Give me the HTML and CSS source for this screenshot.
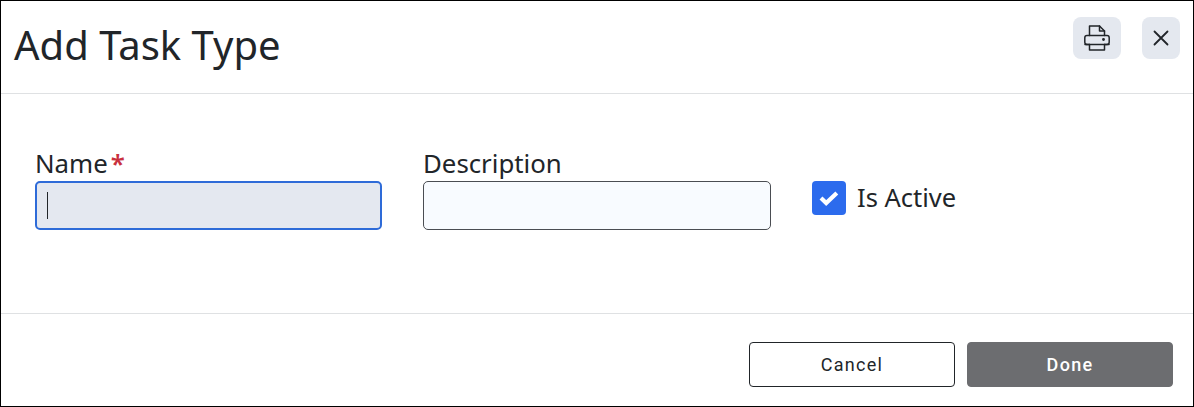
FILE: index.html
```html
<!DOCTYPE html>
<html lang="en">
<head>
    <meta charset="UTF-8">
    <meta name="viewport" content="width=device-width, initial-scale=1.0">
    <title>Add Task Type</title>
    <link rel="stylesheet" href="styles.css">
</head>
<body>
    <div class="dialog">
        <div class="dialog-header">
            <h1>Add Task Type</h1>
            <div class="header-actions">
                <button type="button" class="icon-btn print-btn" aria-label="Print">
                    <svg width="26" height="26" viewBox="0 0 26 26" fill="none" stroke="#212529" stroke-width="1.5" stroke-linejoin="round" stroke-linecap="round">
                        <path d="M5.5 10.5V1h10l5 5v4.5"/>
                        <path d="M15.5 1v5h5"/>
                        <path d="M5.5 19.5H3a2.2 2.2 0 0 1-2.2-2.2v-4.6A2.2 2.2 0 0 1 3 10.5h20a2.2 2.2 0 0 1 2.2 2.2v4.6a2.2 2.2 0 0 1-2.2 2.2h-2.5"/>
                        <path d="M1 19.5h24"/>
                        <path d="M5.5 19.5V25h15v-5.5"/>
                        <circle cx="19.5" cy="14.5" r="0.7" fill="#212529"/>
                    </svg>
                </button>
                <button type="button" class="icon-btn close-btn" aria-label="Close">
                    <svg width="16" height="16" viewBox="0 0 16 16" fill="none" stroke="#212529" stroke-width="1.8" stroke-linecap="round">
                        <path d="M1.5 1.5l13 13M14.5 1.5l-13 13"/>
                    </svg>
                </button>
            </div>
        </div>
        <form class="dialog-body">
            <div class="form-group name-group">
                <label for="name">Name<span class="required">*</span></label>
                <div class="input focused" id="name"><span class="caret"></span></div>
            </div>
            <div class="form-group description-group">
                <label for="description">Description</label>
                <input type="text" id="description" class="input">
            </div>
            <div class="check-group">
                <span class="checkbox">
                    <svg width="20" height="16" viewBox="0 0 20 16" fill="none" stroke="#fff" stroke-width="4.2" stroke-linejoin="miter">
                        <path d="M2 8l5.2 5L17.8 3"/>
                    </svg>
                </span>
                <span class="check-label">Is Active</span>
            </div>
        </form>
        <div class="dialog-footer">
            <button type="button" class="btn btn-cancel">Cancel</button>
            <button type="button" class="btn btn-done">Done</button>
        </div>
    </div>
</body>
</html>
```

FILE: styles.css
```css
html, body {
    margin: 0;
    height: 100%;
}
body {
    font-family: "Noto Sans", "Open Sans", sans-serif;
    color: #212529;
    background: #fff;
}
.dialog {
    box-sizing: border-box;
    height: 100vh;
    border: 1px solid #000;
    display: flex;
    flex-direction: column;
}
.dialog-header {
    box-sizing: border-box;
    height: 93px;
    flex-shrink: 0;
    border-bottom: 1px solid #dfe1e3;
    padding: 15px 13px 0 13px;
    display: flex;
    justify-content: space-between;
    align-items: flex-start;
}
h1 {
    margin: 0;
    font-size: 40px;
    font-weight: 400;
    line-height: 58px;
}
.header-actions {
    display: flex;
    gap: 21px;
    margin-top: 1px;
}
.icon-btn {
    height: 42px;
    padding: 0;
    border: none;
    border-radius: 8px;
    background: #e4e8ef;
    display: flex;
    align-items: center;
    justify-content: center;
}
.print-btn {
    width: 48px;
}
.close-btn {
    width: 38px;
}
.dialog-body {
    flex: 1;
    display: flex;
    padding: 55px 0 0 34px;
    align-items: flex-start;
}
.form-group {
    display: flex;
    flex-direction: column;
}
.name-group {
    width: 347px;
    margin-right: 41px;
}
.description-group {
    width: 348px;
    margin-right: 41px;
}
label {
    font-size: 25.8px;
    font-weight: 400;
    line-height: 28px;
    margin-bottom: 4px;
}
.required {
    color: #c9303e;
    font-weight: 600;
    margin-left: 3px;
}
.input {
    box-sizing: border-box;
    height: 49px;
    width: 100%;
    border: 1px solid #4a4d52;
    border-radius: 5px;
    background: #f8fbff;
    padding: 0 10px;
    display: flex;
    align-items: center;
}
.input.focused {
    border: 2px solid #2e6bd8;
    background: #e4e8f0;
}
.caret {
    width: 1px;
    height: 27px;
    background: #212529;
}
.check-group {
    display: flex;
    align-items: center;
    margin-top: 32px;
    gap: 11px;
}
.checkbox {
    width: 34px;
    height: 34px;
    border-radius: 4px;
    background: #2c6bed;
    display: flex;
    align-items: center;
    justify-content: center;
}
.check-label {
    font-size: 25.5px;
    line-height: 32px;
    padding-bottom: 2px;
}
.dialog-footer {
    box-sizing: border-box;
    height: 93px;
    flex-shrink: 0;
    border-top: 1px solid #dfe1e3;
    padding: 28px 20px 0 0;
    display: flex;
    justify-content: flex-end;
    align-items: flex-start;
    gap: 12px;
}
.btn {
    width: 206px;
    height: 45px;
    border-radius: 4px;
    font-family: Roboto, sans-serif;
    font-size: 18px;
    letter-spacing: 1.3px;
}
.btn-cancel {
    background: #fff;
    border: 1px solid #212529;
    color: #212529;
}
.btn-done {
    background: #6c6d70;
    border: 1px solid #6c6d70;
    color: #fff;
    font-weight: 500;
}
```
